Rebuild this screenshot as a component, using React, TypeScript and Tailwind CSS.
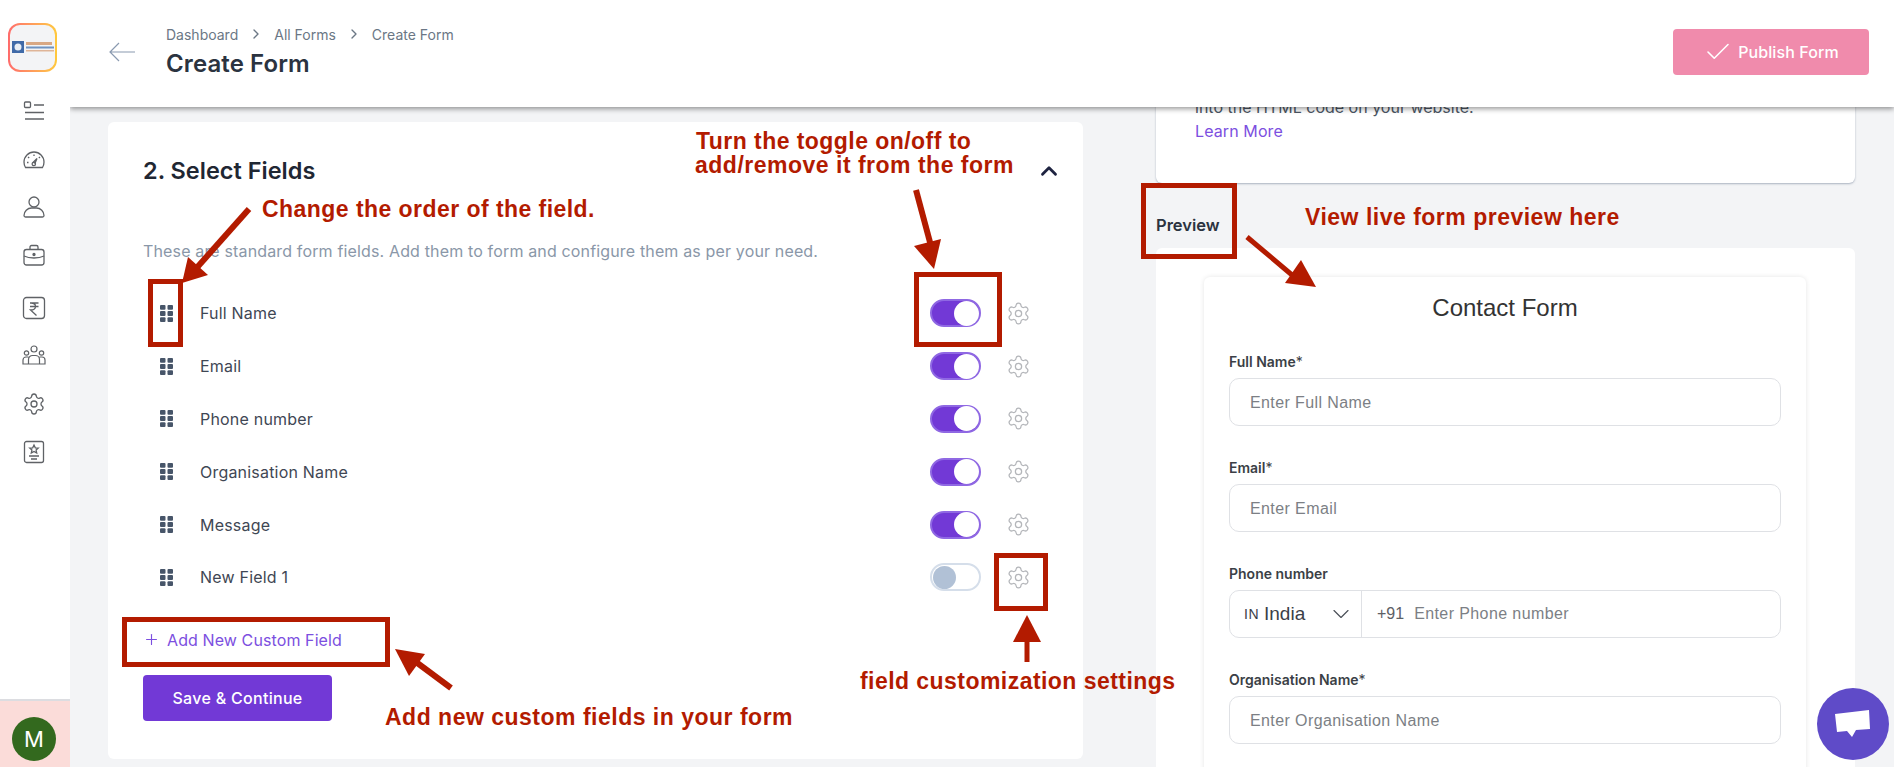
import React from 'react';
import { Check, ChevronDown, ChevronRight, ChevronUp, Plus, Settings } from 'lucide-react';

const fields = [
  { name: 'Full Name', on: true },
  { name: 'Email', on: true },
  { name: 'Phone number', on: true },
  { name: 'Organisation Name', on: true },
  { name: 'Message', on: true },
  { name: 'New Field 1', on: false },
];

const Grip = () => (
  <svg width="13" height="17" viewBox="0 0 13 17" fill="#475569">
    <rect x="0" y="0" width="5.5" height="4.8" rx="1" />
    <rect x="7.5" y="0" width="5.5" height="4.8" rx="1" />
    <rect x="0" y="6.1" width="5.5" height="4.8" rx="1" />
    <rect x="7.5" y="6.1" width="5.5" height="4.8" rx="1" />
    <rect x="0" y="12.2" width="5.5" height="4.8" rx="1" />
    <rect x="7.5" y="12.2" width="5.5" height="4.8" rx="1" />
  </svg>
);

const Toggle = ({ on }: { on: boolean }) =>
  on ? (
    <div className="flex h-[28px] w-[51px] items-center justify-end rounded-full border-2 border-[#8f68e3] bg-[#7239d6]">
      <div className="h-[25px] w-[25px] rounded-full bg-white" />
    </div>
  ) : (
    <div className="flex h-[28px] w-[51px] items-center rounded-full border-2 border-[#d5deea] bg-white pl-[1px]">
      <div className="h-[23px] w-[23px] rounded-full bg-[#b1c1d6]" />
    </div>
  );

const FieldRow = ({ name, on }: { name: string; on: boolean }) => (
  <div className="flex h-[52.8px] items-center">
    <div className="ml-[17px] w-[40px]">
      <Grip />
    </div>
    <span className="text-[16px] tracking-[0.2px] text-[#3f4754]">{name}</span>
    <div className="ml-auto flex items-center">
      <Toggle on={on} />
      <Settings className="ml-[25px] h-[25px] w-[25px] text-[#b4b6ba]" strokeWidth={1.2} />
    </div>
  </div>
);

const FormInput = ({ label, required, placeholder }: { label: string; required?: boolean; placeholder: string }) => (
  <div className="mb-[34px]">
    <div className="mb-[8px] h-[16px] text-[14px] leading-[16px] font-semibold text-[#3b3f46]">
      {label}
      {required && <span className="font-normal">*</span>}
    </div>
    <div className="flex h-[48px] items-center rounded-[10px] border border-[#dfe1e5] pt-[1px] pl-[20px] font-['Liberation_Sans',sans-serif] text-[16px] tracking-[0.4px] text-[#7c7f85]">
      {placeholder}
    </div>
  </div>
);

const iconCls = 'h-[24px] w-[24px] fill-none stroke-[#5f6266]';

const SideIcons = () => (
  <div className="mt-[27px] mr-[3px] flex flex-col items-center gap-[24px]">
    <svg className={iconCls} viewBox="0 0 24 24" strokeWidth="1.3">
      <rect x="2.5" y="3" width="6" height="5.5" rx="1" />
      <path d="M12 6h10M3 13.5h19M3 20h19" />
    </svg>
    <svg className={iconCls} viewBox="0 0 24 24" strokeWidth="1.3">
      <path d="M3.5 20.5c-1-1.5-1.5-3.300-1.500-5.500a10 10 0 0 1 20 0c0 2.200-.5 4-1.500 5.500z" />
      <path d="M12 7.500v1.500M6 10l1.200 1M18 10l-1.200 1M5 15.500h1.500M10.800 15.800L15 11.500l-2.200 5.300" />
      <circle cx="11.800" cy="17" r="1.700" />
    </svg>
    <svg className={iconCls} viewBox="0 0 24 24" strokeWidth="1.3">
      <circle cx="12" cy="7" r="5" />
      <path d="M2 20.500c0-4 3.500-7.500 7.500-7.500h5c4 0 7.500 3.500 7.500 7.500 0 1.200-.8 1.500-1.500 1.500h-17c-.7 0-1.500-.3-1.500-1.500z" />
    </svg>
    <svg className={iconCls} viewBox="0 0 24 24" strokeWidth="1.3">
      <rect x="2" y="6.500" width="20" height="15.500" rx="2.500" />
      <path d="M8 6.500V4a1.500 1.500 0 0 1 1.500-1.500h5A1.500 1.500 0 0 1 16 4v2.500M2 13c3 1.500 6 2 10 2s7-.5 10-2" />
      <circle cx="12" cy="11.500" r="1" fill="#5f6266" />
    </svg>
    <svg className={`${iconCls} mt-[5px]`} viewBox="0 0 24 24" strokeWidth="1.3">
      <rect x="1.500" y="1.500" width="21" height="21" rx="3" />
      <path d="M8 7h8.500M8 10.500h8.500M9 7c3.500 0 4.500 1.500 4.500 3.500S12 14 8.500 14l6 5.500" />
    </svg>
    <svg className={iconCls} viewBox="0 0 24 24" strokeWidth="1.2">
      <circle cx="12" cy="5" r="3" />
      <circle cx="4.500" cy="9" r="2.200" />
      <circle cx="19.500" cy="9" r="2.200" />
      <path d="M6.500 20v-4.500a4 4 0 0 1 4-4h3a4 4 0 0 1 4 4V20zM6.500 13H4a3 3 0 0 0-3 3v4h5.500M17.500 13H20a3 3 0 0 1 3 3v4h-5.500" />
    </svg>
    <Settings className="h-[24px] w-[24px] text-[#5f6266]" strokeWidth={1.3} />
    <svg className={iconCls} viewBox="0 0 24 24" strokeWidth="1.3">
      <rect x="2.500" y="1.500" width="19" height="21" rx="2" />
      <path d="M12 5l1.300 2.800 3 .3-2.200 2 .6 2.900-2.700-1.500L9.300 13l.6-2.900-2.200-2 3-.3zM7 16h10M9 19h6" />
    </svg>
  </div>
);

const Annotations = () => (
  <div className="pointer-events-none absolute inset-0 z-30 font-['Liberation_Sans',sans-serif] font-bold text-[#b31b00]">
    <div className="absolute top-[279px] left-[148px] h-[68px] w-[35px] border-[5px] border-[#b31b00]" />
    <div className="absolute top-[272px] left-[914px] h-[75px] w-[88px] border-[5px] border-[#b31b00]" />
    <div className="absolute top-[553px] left-[994px] h-[58px] w-[54px] border-[5px] border-[#b31b00]" />
    <div className="absolute top-[617px] left-[122px] h-[50px] w-[268px] border-[5px] border-[#b31b00]" />
    <div className="absolute top-[183px] left-[1141px] h-[76px] w-[96px] border-[5px] border-[#b31b00]" />

    <svg className="absolute inset-0" width="1894" height="767" fill="#b31b00" stroke="none">
      <path d="M249 209L193 272" stroke="#b31b00" strokeWidth="6" />
      <polygon points="182,283 188,257 208,275" />
      <path d="M916 190L931 246" stroke="#b31b00" strokeWidth="6" />
      <polygon points="934,269 914,246 941,239" />
      <path d="M1247 237L1298 280" stroke="#b31b00" strokeWidth="5" />
      <polygon points="1316,287 1301,260 1285,283" />
      <path d="M451 688L416 662" stroke="#b31b00" strokeWidth="6" />
      <polygon points="395,649 425,654 409,676" />
      <path d="M1027 640V662" stroke="#b31b00" strokeWidth="5" />
      <polygon points="1027,615 1013,642 1041,642" />
    </svg>

    <div className="absolute top-[196px] left-[262px] text-[23px] leading-[26px] tracking-[0.45px] whitespace-nowrap">Change the order of the field.</div>
    <div className="absolute top-[129px] left-[696px] text-[23px] leading-[24px] tracking-[0.45px] whitespace-nowrap">Turn the toggle on/off to</div>
    <div className="absolute top-[153px] left-[695px] text-[23px] leading-[24px] tracking-[0.5px] whitespace-nowrap">add/remove it from the form</div>
    <div className="absolute top-[204px] left-[1305px] text-[23px] leading-[26px] tracking-[0.5px] whitespace-nowrap">View live form preview here</div>
    <div className="absolute top-[704px] left-[385px] text-[23px] leading-[26px] tracking-[0.5px] whitespace-nowrap">Add new custom fields in your form</div>
    <div className="absolute top-[668px] left-[860px] text-[23px] leading-[26px] tracking-[0.45px] whitespace-nowrap">field customization settings</div>
  </div>
);

export default function App() {
  return (
    <div className="relative flex h-[767px] w-[1894px] overflow-hidden bg-[#f3f4f6] font-['Inter',sans-serif]">
      {/* Sidebar */}
      <aside className="relative z-20 flex w-[70px] shrink-0 flex-col items-center bg-white">
        <div className="mt-[23px] mr-[5px] rounded-[12px] bg-gradient-to-r from-[#ff6b6b] to-[#ffc93c] p-[2px]">
          <div className="flex h-[45px] w-[45px] items-center justify-center rounded-[10px] bg-[#f3f4f6]">
            <svg width="42" height="13" viewBox="0 0 42 13">
              <rect width="12" height="12" fill="#3f6aa8" />
              <circle cx="6" cy="6" r="3.500" fill="#e8eef5" />
              <rect x="14" y="1" width="26" height="3" fill="#d8a884" />
              <rect x="14" y="5.500" width="28" height="2" fill="#6f93c2" />
              <rect x="14" y="9" width="28" height="1.500" fill="#dfb598" />
            </svg>
          </div>
        </div>
        <SideIcons />
        <div className="mt-auto flex h-[68px] w-full items-start border-t-2 border-[#dcdde1] bg-[#fbdcd9] pt-[16px] pl-[12px]">
          <div className="flex h-[44px] w-[44px] items-center justify-center rounded-full bg-[#33691e] text-[22px] text-white">
            M
          </div>
        </div>
      </aside>

      <div className="flex min-w-0 flex-1 flex-col">
        {/* Header */}
        <header className="relative z-10 flex h-[107px] shrink-0 items-start bg-white shadow-[0_2px_5px_rgba(0,0,0,0.4)]">
          <svg className="mt-[42px] ml-[39px] stroke-[#8a9ab0]" width="26" height="20" viewBox="0 0 26 20" fill="none" strokeWidth="1.2">
            <path d="M1 10h25M10 1l-9 9 9 9" />
          </svg>
          <div className="ml-[31px] pt-[24px]">
            <div className="flex h-[20px] items-center text-[14px] text-[#6b7785]">
              <span>Dashboard</span>
              <ChevronRight className="mx-[10px] h-[16px] w-[16px]" />
              <span>All Forms</span>
              <ChevronRight className="mx-[10px] h-[16px] w-[16px]" />
              <span>Create Form</span>
            </div>
            <h1 className="mt-[6px] text-[24px] leading-[28px] font-semibold tracking-[0.1px] text-[#2b3340]">Create Form</h1>
          </div>
          <button className="mt-[29px] mr-[25px] ml-auto flex h-[46px] w-[196px] items-center justify-center rounded-[4px] bg-[#f08bac] text-[16px] font-medium tracking-[0.1px] text-white">
            <Check className="mr-[5px] h-[30px] w-[30px]" strokeWidth={1.3} />
            Publish Form
          </button>
        </header>

        {/* Content */}
        <div className="flex min-h-0 flex-1 items-start pl-[38px]">
          {/* Select fields */}
          <section className="mt-[15px] h-[637px] w-[975px] shrink-0 rounded-[6px] bg-white pl-[35px]">
            <div className="flex h-[96px] items-center justify-between pt-[1px] pr-[21px]">
              <h2 className="text-[23.5px] font-semibold text-[#1f2733]">2. Select Fields</h2>
              <ChevronUp className="h-[26px] w-[26px] text-[#1e2340]" strokeWidth={2.6} />
            </div>
            <p className="mt-[21px] mb-[24px] text-[16px] leading-[24px] tracking-[0.15px] text-[#8a97a8]">
              These are standard form fields. Add them to form and configure them as per your need.
            </p>
            <div className="pr-[52px]">
              {fields.map(f => (
                <FieldRow key={f.name} name={f.name} on={f.on} />
              ))}
            </div>
            <div className="mt-[24px] flex h-[24px] items-center text-[16px] tracking-[0.1px] text-[#7c4fe0]">
              <Plus className="mr-[7px] h-[17px] w-[17px]" strokeWidth={1.6} />
              Add New Custom Field
            </div>
            <button className="mt-[23px] h-[46px] w-[189px] rounded-[4px] bg-[#7239d6] text-[16px] font-medium tracking-[0.3px] text-white">
              Save &amp; Continue
            </button>
          </section>

          {/* Embed info and preview */}
          <div className="relative -mt-[40px] ml-[73px] w-[699px] shrink-0">
            <div className="h-[116px] rounded-[6px] bg-white pt-[28px] pl-[39px] shadow-[0_1px_2px_rgba(100,116,139,0.5)]">
              <p className="text-[16px] leading-[24px] text-[#4b5563]">into the HTML code on your website.</p>
              <a className="block text-[16px] leading-[24px] tracking-[0.1px] text-[#7c4fe0]">Learn More</a>
            </div>
            <div className="mt-[33px] h-[23px] text-[16.5px] leading-[18px] font-semibold text-[#2b3340]">Preview</div>
            <div className="mt-[9px] rounded-[6px] bg-white px-[48px] pt-[29px]">
              <div className="h-[600px] w-[602px] rounded-[6px] bg-white px-[25px] pt-[13px] shadow-[0_0_5px_rgba(0,0,0,0.1)]">
                <h3 className="h-[36px] text-center font-['Liberation_Sans',sans-serif] text-[24px] leading-[36px] text-[#333]">
                  Contact Form
                </h3>
                <div className="h-[28px]" />
                <FormInput label="Full Name" required placeholder="Enter Full Name" />
                <FormInput label="Email" required placeholder="Enter Email" />
                <div className="mb-[34px]">
                  <div className="mb-[8px] h-[16px] text-[14px] leading-[16px] font-semibold text-[#3b3f46]">Phone number</div>
                  <div className="flex h-[48px] items-center rounded-[10px] border border-[#dfe1e5] font-['Liberation_Sans',sans-serif]">
                    <div className="flex h-full w-[132px] items-center border-r border-[#dfe1e5] pl-[14px] text-[#3b4048]">
                      <span className="mr-[5px] text-[14px] font-medium tracking-[0.5px]">IN</span>
                      <span className="text-[19px]">India</span>
                      <ChevronDown className="mr-[6px] ml-auto h-[28px] w-[28px] text-[#4b5058]" strokeWidth={1} />
                    </div>
                    <span className="ml-[15px] text-[16px] text-[#5d6066]">+91</span>
                    <span className="ml-[10px] text-[16px] tracking-[0.4px] text-[#7c7f85]">Enter Phone number</span>
                  </div>
                </div>
                <FormInput label="Organisation Name" required placeholder="Enter Organisation Name" />
              </div>
            </div>
          </div>
        </div>
      </div>

      {/* Chat bubble */}
      <div className="absolute top-[688px] left-[1817px] z-20 flex h-[72px] w-[72px] items-center justify-center rounded-full bg-[#5f4bc8]">
        <svg width="36" height="28" viewBox="0 0 36 28" fill="#fff">
          <polygon points="0,4 34,0 35,19 21,20 17,27 12,21 2,22" />
        </svg>
      </div>

      <Annotations />
    </div>
  );
}
